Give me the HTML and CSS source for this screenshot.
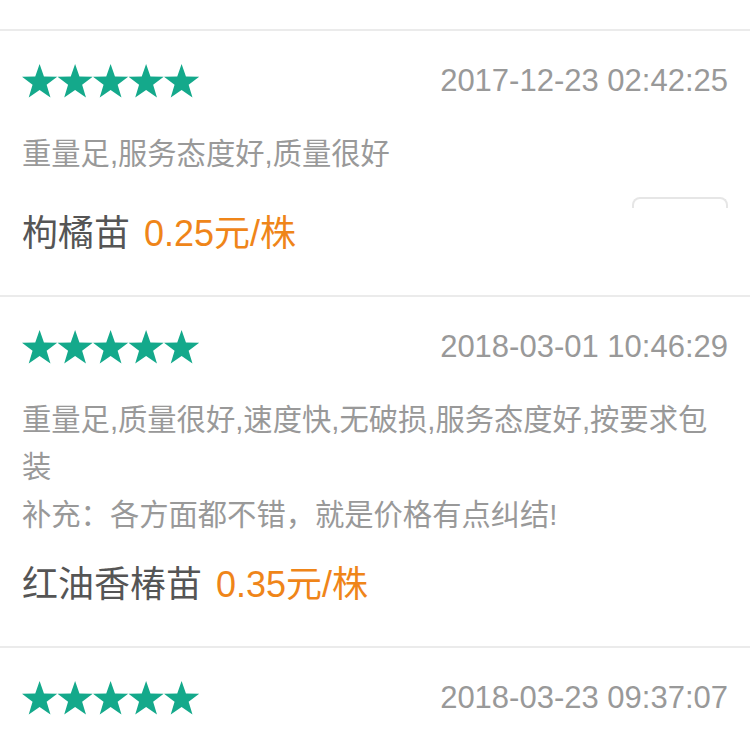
FILE: index.html
```html
<!DOCTYPE html>
<html lang="zh-CN">
<head>
    <meta charset="UTF-8">
    <meta name="viewport" content="width=device-width, initial-scale=1.0">
    <title>商品评价</title>
    <link rel="stylesheet" href="styles.css">
</head>
<body>
    <svg class="defs" width="0" height="0">
        <defs>
            <polygon id="star" points="0,-18.5 4.35,-5.99 17.59,-5.72 7.04,2.29 10.87,14.97 0,7.4 -10.87,14.97 -7.04,2.29 -17.59,-5.72 -4.35,-5.99"/>
        </defs>
    </svg>

    <div class="review-list">
        <div class="review">
            <div class="review-head">
                <svg class="stars" width="180" height="34" viewBox="0 0 180 34">
                    <use href="#star" x="17.6" y="18.5"/>
                    <use href="#star" x="53.1" y="18.5"/>
                    <use href="#star" x="88.6" y="18.5"/>
                    <use href="#star" x="124.1" y="18.5"/>
                    <use href="#star" x="159.6" y="18.5"/>
                </svg>
                <span class="date">2017-12-23 02:42:25</span>
            </div>
            <div class="comment">重量足,服务态度好,质量很好</div>
            <div class="btn-stub"></div>
            <div class="product">枸橘苗<span class="price">0.25元/株</span></div>
        </div>

        <div class="review">
            <div class="review-head">
                <svg class="stars" width="180" height="34" viewBox="0 0 180 34">
                    <use href="#star" x="17.6" y="18.5"/>
                    <use href="#star" x="53.1" y="18.5"/>
                    <use href="#star" x="88.6" y="18.5"/>
                    <use href="#star" x="124.1" y="18.5"/>
                    <use href="#star" x="159.6" y="18.5"/>
                </svg>
                <span class="date">2018-03-01 10:46:29</span>
            </div>
            <div class="comment">重量足,质量很好,速度快,无破损,服务态度好,按要求包装<br>补充：各方面都不错，就是价格有点纠结!</div>
            <div class="product">红油香椿苗<span class="price">0.35元/株</span></div>
        </div>

        <div class="review">
            <div class="review-head">
                <svg class="stars" width="180" height="34" viewBox="0 0 180 34">
                    <use href="#star" x="17.6" y="18.5"/>
                    <use href="#star" x="53.1" y="18.5"/>
                    <use href="#star" x="88.6" y="18.5"/>
                    <use href="#star" x="124.1" y="18.5"/>
                    <use href="#star" x="159.6" y="18.5"/>
                </svg>
                <span class="date">2018-03-23 09:37:07</span>
            </div>
        </div>
    </div>
</body>
</html>
```

FILE: styles.css
```css
body {
    margin: 0;
    background-color: #fff;
    font-family: "Liberation Sans", "Noto Sans CJK SC", sans-serif;
    overflow: hidden;
}
.defs {
    position: absolute;
}
.review-list {
    padding-top: 29px;
}
.review {
    border-top: 2px solid #ebebeb;
    padding: 32px 22px 39px;
}
.review-head {
    display: flex;
    justify-content: space-between;
    align-items: center;
}
.stars {
    display: block;
    fill: #14a98b;
}
.date {
    font-size: 31px;
    color: #999;
}
/* mixed latin/cjk fonts grow the line box a little, so line-height is set just under the wanted pitch */
.comment {
    margin-top: 31px;
    font-size: 29.3px;
    line-height: 47.2px;
    color: #999;
}
.btn-stub {
    margin: 20px 0 0 auto;
    width: 92px;
    height: 9px;
    border: 2px solid #e6e6e6;
    border-bottom: none;
    border-radius: 8px 8px 0 0;
}
.product {
    margin-top: 25px;
    font-size: 36px;
    line-height: 44px;
    color: #555;
}
.btn-stub + .product {
    margin-top: 4px;
}
.price {
    margin-left: 14px;
    color: #ef8519;
}
```
